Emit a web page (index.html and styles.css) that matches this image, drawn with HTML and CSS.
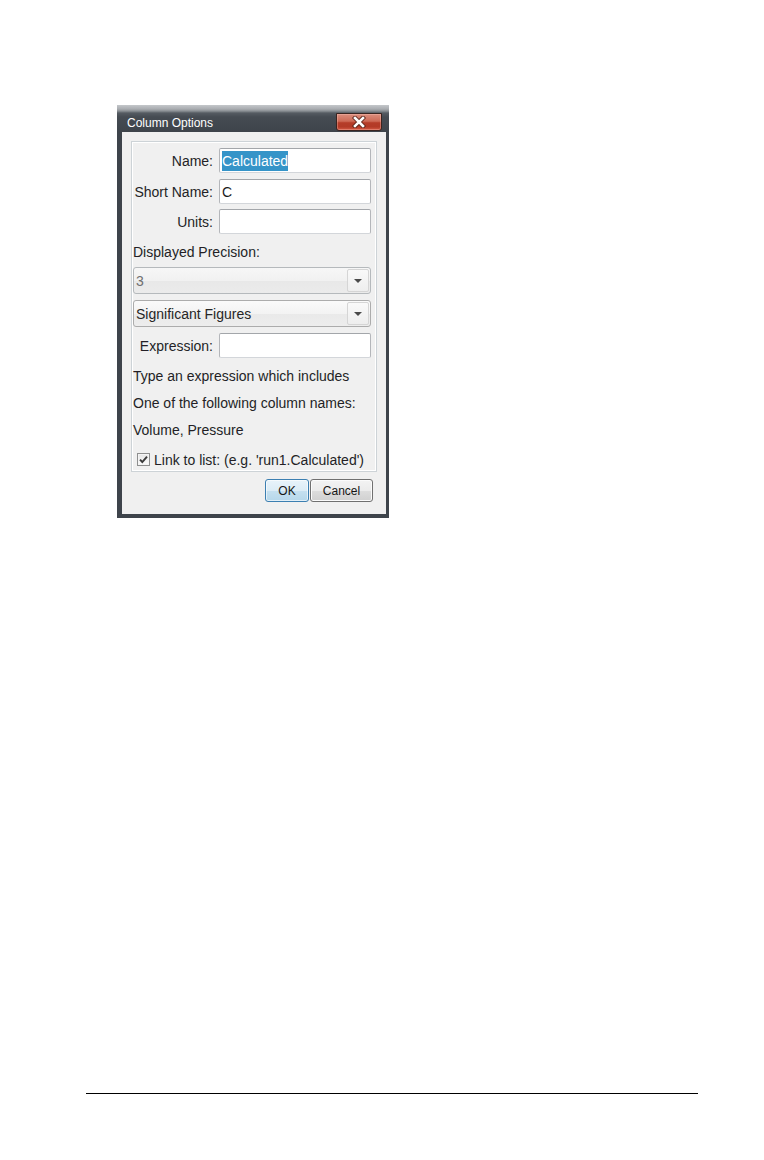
FILE: index.html
```html
<!DOCTYPE html>
<html lang="en">
<head>
<meta charset="utf-8">
<title>Column Options</title>
<link rel="stylesheet" href="styles.css">
</head>
<body>
<div class="page">
  <div class="dialog">
    <div class="titlebar">
      <span class="title">Column Options</span>
      <div class="close">
        <svg width="14" height="12" viewBox="0 0 14 12">
          <path d="M3 2 L11 10 M11 2 L3 10" stroke="#5a2419" stroke-width="4.4" stroke-linecap="square" fill="none"/>
          <path d="M3 2 L11 10 M11 2 L3 10" stroke="#ffffff" stroke-width="2.6" stroke-linecap="square" fill="none"/>
        </svg>
      </div>
    </div>
    <div class="client">
      <div class="group">
        <div class="row">
          <span class="label">Name:</span>
          <div class="input"><span class="sel">Calculated</span></div>
        </div>
        <div class="row gap6">
          <span class="label">Short Name:</span>
          <div class="input">C</div>
        </div>
        <div class="row gap5">
          <span class="label">Units:</span>
          <div class="input"></div>
        </div>
        <div class="caption">Displayed Precision:</div>
        <div class="combo disabled">
          <span class="combo-text">3</span>
          <span class="drop"><span class="tri"></span></span>
        </div>
        <div class="combo enabled">
          <span class="combo-text">Significant Figures</span>
          <span class="drop"><span class="tri"></span></span>
        </div>
        <div class="row gap6">
          <span class="label">Expression:</span>
          <div class="input"></div>
        </div>
        <div class="notes">
          <div class="note">Type an expression which includes</div>
          <div class="note">One of the following column names:</div>
          <div class="note">Volume, Pressure</div>
        </div>
        <div class="check-row">
          <span class="checkbox">
            <svg width="11" height="11" viewBox="0 0 11 11">
              <path d="M2 5.6 L4.3 8 L9 2.6" stroke="#3a3a3a" stroke-width="1.9" fill="none"/>
            </svg>
          </span>
          <span class="check-label">Link to list: (e.g. 'run1.Calculated')</span>
        </div>
      </div>
      <div class="buttons">
        <div class="btn ok">OK</div>
        <div class="btn cancel">Cancel</div>
      </div>
    </div>
  </div>
  <div class="rule"></div>
</div>
</body>
</html>
```

FILE: styles.css
```css
* {
  box-sizing: border-box;
}

body {
  margin: 0;
  background: #ffffff;
  font-family: "Liberation Sans", Arial, sans-serif;
}

.page {
  padding-top: 105px;
  height: 1160px;
  overflow: hidden;
}

.dialog {
  margin-left: 117px;
  width: 272px;
  background: #3e444b;
  padding: 0 3px 4px 5px;
  display: flex;
  flex-direction: column;
}

.titlebar {
  height: 27px;
  margin: 0 -3px 0 -5px;
  padding-left: 10px;
  display: flex;
  align-items: flex-start;
  background: linear-gradient(#c4c7ca 0px, #a9acb0 4px, #8b9095 6px, #555b62 8px, #454b52 12px, #3e444b 27px);
}

.title {
  color: #ffffff;
  font-size: 12px;
  line-height: 14px;
  margin-top: 11px;
  white-space: nowrap;
}

.close {
  margin-left: auto;
  margin-top: 8px;
  margin-right: 7px;
  width: 46px;
  height: 18px;
  border: 1px solid #3a2420;
  border-radius: 0 0 3px 3px;
  background: linear-gradient(#dc8f7e 0%, #cd6a56 45%, #b53c28 55%, #b23a27 80%, #d45a44 100%);
  box-shadow: inset 0 0 0 1px rgba(255, 200, 190, 0.35);
  display: flex;
  align-items: center;
  justify-content: center;
}

.client {
  background: #f0f0f0;
  height: 382px;
  padding: 9px;
}

.group {
  height: 331px;
  border: 1px solid #cdd3d7;
  box-shadow: inset 0 0 0 1px #ffffff;
  padding: 6px 5px 2px 1px;
  display: flex;
  flex-direction: column;
  color: #231f26;
  font-size: 14px;
}

.row {
  display: flex;
  align-items: center;
  height: 25px;
  flex: none;
}

.gap6 {
  margin-top: 6px;
}

.gap5 {
  margin-top: 5px;
}

.label {
  width: 80px;
  margin-right: 6px;
  text-align: right;
  white-space: nowrap;
  line-height: 16px;
  padding-top: 1px;
}

.input {
  width: 152px;
  height: 25px;
  background: #ffffff;
  border: 1px solid #b4b6ba;
  border-top-color: #a3a6aa;
  border-bottom-color: #d3d6da;
  border-radius: 2px;
  padding-left: 2px;
  padding-top: 1px;
  line-height: 22px;
  color: #1a1a1a;
  white-space: nowrap;
}

.sel {
  display: inline-block;
  vertical-align: top;
  margin-top: 1px;
  height: 20px;
  line-height: 20px;
  background: #3594c8;
  color: #ffffff;
}

.caption {
  margin-top: 10px;
  line-height: 16px;
  flex: none;
}

.combo {
  margin-top: 7px;
  width: 238px;
  height: 27px;
  flex: none;
  border: 1px solid #acacac;
  border-radius: 3px;
  display: flex;
  align-items: center;
  padding-left: 2px;
}

.combo + .combo {
  margin-top: 6px;
}

.combo.disabled {
  border-color: #b5b9bc;
  background: linear-gradient(#f7f7f7 0%, #f1f1f1 50%, #e8e8e8 51%, #ebebeb 100%);
  color: #707070;
}

.combo.enabled {
  background: linear-gradient(#fafafa 0%, #f3f3f3 50%, #e9e9e9 51%, #ededed 100%);
  color: #262626;
}

.combo-text {
  white-space: nowrap;
  line-height: 16px;
  padding-top: 1px;
}

.drop {
  margin-left: auto;
  margin-right: 1px;
  width: 22px;
  height: 23px;
  border: 1px solid #d5d5d5;
  border-radius: 2px;
  background: linear-gradient(#f9f9f9, #eeeeee);
  display: flex;
  align-items: center;
  justify-content: center;
}

.tri {
  width: 0;
  height: 0;
  border-left: 4px solid transparent;
  border-right: 4px solid transparent;
  border-top: 4px solid #4a4a4a;
  margin-top: 1px;
}

.notes {
  margin-top: 5px;
  flex: none;
}

.note {
  line-height: 27px;
  white-space: nowrap;
}

.check-row {
  margin-top: 5px;
  height: 20px;
  display: flex;
  align-items: center;
  flex: none;
}

.checkbox {
  margin-left: 4px;
  width: 13px;
  height: 13px;
  border: 1px solid #8e8f8f;
  background: linear-gradient(#e6e6e6, #fbfbfb);
  box-shadow: inset 0 0 0 1px #f4f4f4;
  display: flex;
  align-items: center;
  justify-content: center;
}

.check-label {
  margin-left: 4px;
  white-space: nowrap;
  line-height: 16px;
  padding-top: 1px;
}

.buttons {
  display: flex;
  justify-content: flex-end;
  gap: 1px;
  margin-top: 7px;
  padding-right: 4px;
}

.btn {
  height: 23px;
  border-radius: 3px;
  font-size: 12px;
  color: #151515;
  display: flex;
  align-items: center;
  justify-content: center;
}

.ok {
  width: 44px;
  border: 1px solid #3c7fb1;
  background: linear-gradient(#e8f3fa 0%, #dcecf6 50%, #c5e0f0 51%, #b6d7ea 100%);
  box-shadow: inset 0 0 0 1px rgba(255, 255, 255, 0.6);
}

.cancel {
  width: 63px;
  border: 1px solid #707070;
  background: linear-gradient(#f3f3f3 0%, #ebebeb 50%, #dddddd 51%, #d0d0d0 100%);
  box-shadow: inset 0 0 0 1px #fbfbfb;
}

.rule {
  margin-top: 575px;
  margin-left: 86px;
  width: 612px;
  height: 1px;
  background: #000000;
}
```
